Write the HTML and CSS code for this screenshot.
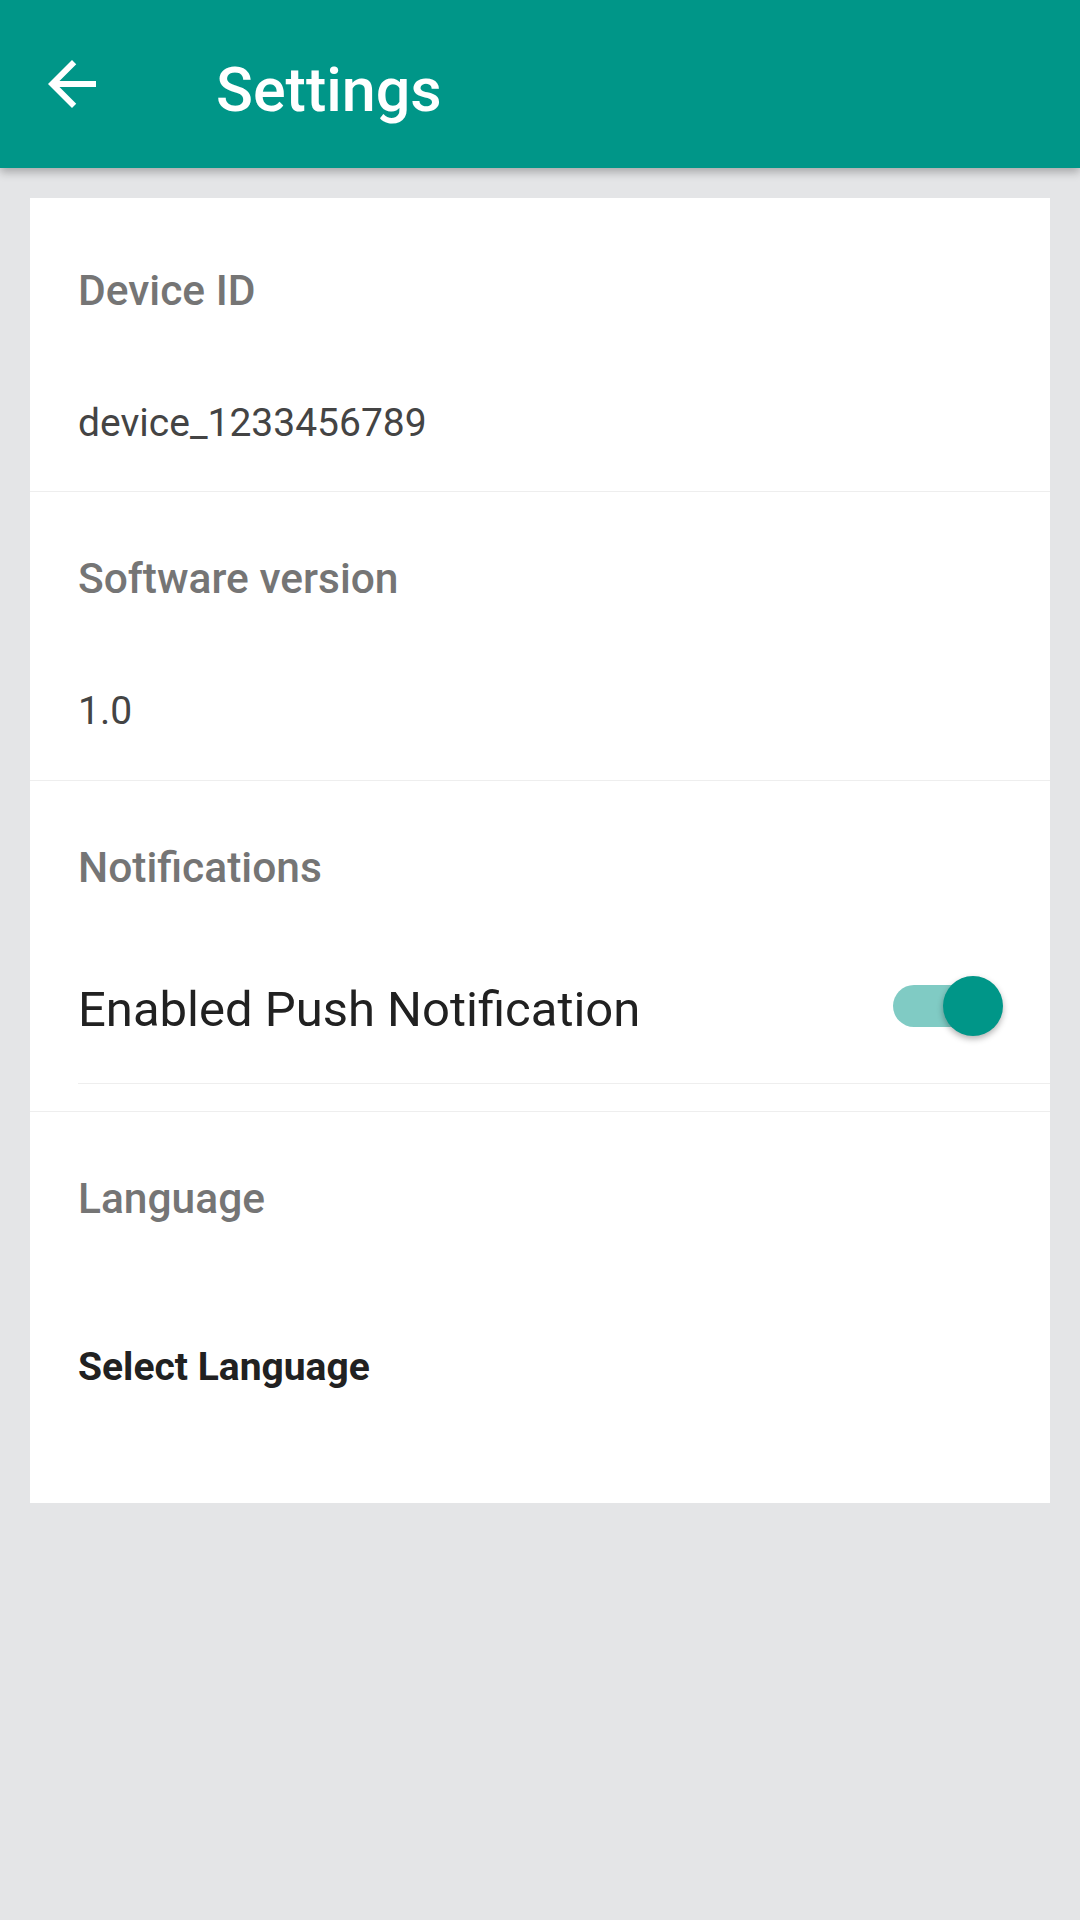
FILE: index.html
```html
<!DOCTYPE html>
<html lang="en">
<head>
    <meta charset="UTF-8">
    <meta name="viewport" content="width=device-width, initial-scale=1.0">
    <title>Settings</title>
    <link rel="stylesheet" href="styles.css">
</head>
<body>
    <header class="toolbar">
        <svg class="back" viewBox="0 0 24 24" width="72" height="72">
            <path d="M20 11H7.83l5.59-5.59L12 4l-8 8 8 8 1.41-1.41L7.83 13H20v-2z" fill="#fff"/>
        </svg>
        <h1 class="title">Settings</h1>
    </header>

    <main class="card">
        <section class="group first">
            <div class="label">Device ID</div>
            <div class="value">device_1233456789</div>
        </section>

        <section class="group">
            <div class="label">Software version</div>
            <div class="value">1.0</div>
        </section>

        <section class="group notif">
            <div class="label">Notifications</div>
            <div class="switch-row">
                <span class="switch-text">Enabled Push Notification</span>
                <div class="switch">
                    <div class="track"></div>
                    <div class="thumb"></div>
                </div>
            </div>
        </section>

        <section class="group lang">
            <div class="label">Language</div>
            <div class="value select">Select Language</div>
        </section>
    </main>
</body>
</html>
```

FILE: styles.css
```css
body {
    margin: 0;
    padding: 0;
    background: #e4e5e7;
    font-family: 'Roboto', 'Noto Sans', sans-serif;
    min-height: 1920px;
}
.toolbar {
    position: relative;
    z-index: 1;
    height: 168px;
    background: #009688;
    display: flex;
    align-items: center;
    box-shadow: 0 4px 9px rgba(0,0,0,0.28);
}
.back {
    margin-left: 36px;
    flex-shrink: 0;
}
.title {
    margin: 0 0 0 108px;
    padding-top: 11px;
    font-size: 61px;
    font-weight: 500;
    color: #fff;
}
.card {
    margin: 30px 30px 0;
    background: #fff;
}
.group {
    padding: 63px 0 45px 48px;
    border-top: 1px solid #eeeeee;
}
.group.first {
    padding-top: 69px;
    padding-bottom: 44px;
    border-top: none;
}
.label {
    font-size: 42.5px;
    line-height: 48px;
    font-weight: 500;
    color: #757575;
    margin-bottom: 84px;
}
.value {
    font-size: 39px;
    line-height: 48px;
    color: #444444;
}
.group.notif {
    padding-bottom: 27px;
}
.switch-row {
    display: flex;
    align-items: center;
    justify-content: space-between;
    padding: 0 47px 42px 0;
    border-bottom: 1px solid #eeeeee;
}
.switch-text {
    padding: 5px 0 3px;
    font-size: 49px;
    line-height: 56px;
    color: #212121;
}
.switch {
    position: relative;
    width: 110px;
    height: 60px;
    margin-bottom: 5px;
}
.track {
    position: absolute;
    left: 0;
    top: 9px;
    width: 102px;
    height: 42px;
    border-radius: 21px;
    background: #80cbc4;
}
.thumb {
    position: absolute;
    right: 0;
    top: 0;
    width: 60px;
    height: 60px;
    border-radius: 50%;
    background: #009688;
    box-shadow: 0 3px 6px rgba(0,0,0,0.3);
}
.group.lang {
    padding-bottom: 112px;
}
.value.select {
    margin-top: 120px;
    font-weight: 700;
    color: #212121;
}
```
